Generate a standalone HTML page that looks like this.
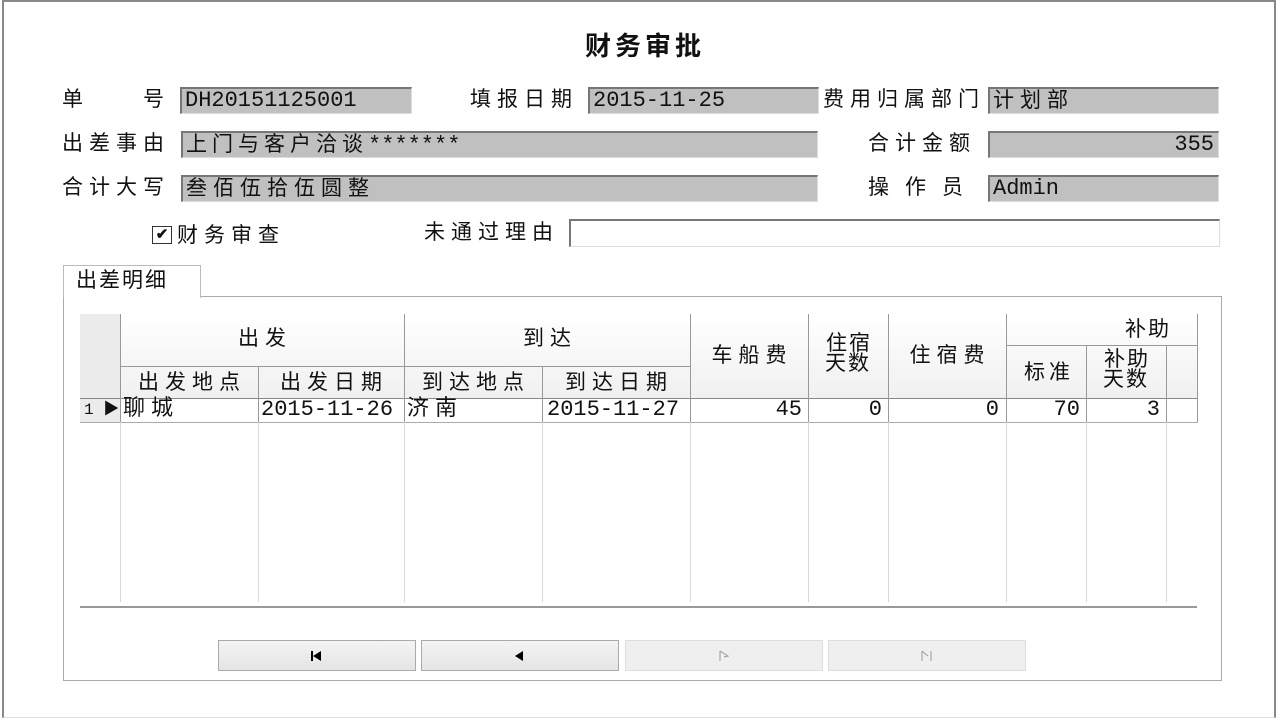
<!DOCTYPE html>
<html><head><meta charset="utf-8"><style>
*{margin:0;padding:0;box-sizing:border-box}
body{width:1280px;height:720px;background:#fff;position:relative;overflow:hidden;font-family:"Liberation Sans","Noto Sans CJK SC",sans-serif;color:#111}
.a{position:absolute}
.lbl{position:absolute;font-size:21px;line-height:26px;white-space:nowrap;letter-spacing:6px}
.inp{position:absolute;background:#c0c0c0;border-top:2px solid #777;border-left:2px solid #777;border-right:1px solid #ddd;border-bottom:1px solid #ddd;font-family:"Liberation Mono","Noto Sans CJK SC",monospace;font-size:22px;line-height:24px;padding-left:3px;white-space:nowrap;overflow:hidden}
.cn{font-family:"Liberation Sans","Noto Sans CJK SC",sans-serif;font-size:21px;letter-spacing:6px}
.vl{position:absolute;width:1px;background:#d8d8d8}
.hv{position:absolute;width:1px;background:#999}
.h{position:absolute;font-size:21px;text-align:center;line-height:22px;letter-spacing:6px;text-indent:6px}
.d{position:absolute;font-size:22px;top:399px;line-height:22px;font-family:"Liberation Mono","Noto Sans CJK SC",monospace}
.btn{position:absolute;top:640px;height:31px;width:198px;background:linear-gradient(#f4f4f4,#e4e4e4);border:1px solid #aaa;text-align:center}
.btn.dis{border-color:#ddd;background:#efefef}
</style></head><body>
<div class="a" style="left:2px;top:0;width:1274px;height:718px;border:2px solid #888;border-bottom:1px solid #ddd;border-top-width:2px"></div>
<div class="a" style="left:0;width:1280px;top:26px;text-align:center;font-size:26px;font-weight:bold;padding-left:10px;letter-spacing:4px">财务审批</div>

<div class="lbl" style="left:62px;top:87px;letter-spacing:0">单<span style="display:inline-block;width:60px"></span>号</div>
<div class="inp" style="left:180px;top:87px;width:232px;height:27px">DH20151125001</div>
<div class="lbl" style="left:470px;top:87px">填报日期</div>
<div class="inp" style="left:588px;top:87px;width:231px;height:27px">2015-11-25</div>
<div class="lbl" style="left:823px;top:87px;letter-spacing:6px">费用归属部门</div>
<div class="inp cn" style="left:988px;top:87px;width:231px;height:27px">计划部</div>

<div class="lbl" style="left:62px;top:131px">出差事由</div>
<div class="inp cn" style="left:181px;top:131px;width:637px;height:27px;letter-spacing:5px">上门与客户洽谈<span style="letter-spacing:0;font-family:'Liberation Mono',monospace;font-size:22px">*******</span></div>
<div class="lbl" style="left:868px;top:131px">合计金额</div>
<div class="inp" style="left:988px;top:131px;width:231px;height:27px;text-align:right;padding-right:4px">355</div>

<div class="lbl" style="left:62px;top:175px">合计大写</div>
<div class="inp cn" style="left:181px;top:175px;width:637px;height:27px">叁佰伍拾伍圆整</div>
<div class="lbl" style="left:868px;top:175px;letter-spacing:0">操<span style="display:inline-block;width:16px"></span>作<span style="display:inline-block;width:16px"></span>员</div>
<div class="inp" style="left:988px;top:175px;width:231px;height:27px">Admin</div>

<div class="a" style="left:152px;top:226px;width:20px;height:18px;border:1px solid #333;font-size:15px;line-height:16px;text-align:center;font-weight:bold">✔</div>
<div class="lbl" style="left:177px;top:223px">财务审查</div>
<div class="lbl" style="left:424px;top:220px">未通过理由</div>
<div class="a" style="left:569px;top:219px;width:651px;height:28px;border-top:2px solid #777;border-left:2px solid #777;border-right:1px solid #ddd;border-bottom:1px solid #ddd"></div>

<div class="a" style="left:63px;top:265px;width:138px;height:33px;border:1px solid #bbb;border-bottom:none;background:#fff;z-index:2"></div>
<div class="lbl" style="left:76px;top:268px;z-index:3;letter-spacing:2px">出差明细</div>
<div class="a" style="left:63px;top:296px;width:1159px;height:385px;border:1px solid #aaa"></div>

<div class="a" style="left:80px;top:314px;width:1118px;height:84px;background:linear-gradient(#fff,#f0f0f0)"></div>
<div class="a" style="left:80px;top:314px;width:40px;height:108px;background:#ececec"></div>
<div class="a" style="left:120px;top:366px;width:570px;height:1px;background:#999"></div>
<div class="a" style="left:1006px;top:345px;width:192px;height:1px;background:#999"></div>
<div class="a" style="left:80px;top:398px;width:1118px;height:1px;background:#888"></div>
<div class="a" style="left:80px;top:422px;width:1118px;height:1px;background:#aaa"></div>
<div class="hv" style="left:120px;top:314px;height:108px"></div>
<div class="hv" style="left:258px;top:366px;height:56px"></div>
<div class="hv" style="left:404px;top:314px;height:108px"></div>
<div class="hv" style="left:542px;top:366px;height:56px"></div>
<div class="hv" style="left:690px;top:314px;height:108px"></div>
<div class="hv" style="left:808px;top:314px;height:108px"></div>
<div class="hv" style="left:888px;top:314px;height:108px"></div>
<div class="hv" style="left:1006px;top:314px;height:108px"></div>
<div class="hv" style="left:1086px;top:345px;height:77px"></div>
<div class="hv" style="left:1166px;top:345px;height:77px"></div>
<div class="hv" style="left:1197px;top:314px;height:108px"></div>
<div class="vl" style="left:120px;top:422px;height:180px"></div>
<div class="vl" style="left:258px;top:422px;height:180px"></div>
<div class="vl" style="left:404px;top:422px;height:180px"></div>
<div class="vl" style="left:542px;top:422px;height:180px"></div>
<div class="vl" style="left:690px;top:422px;height:180px"></div>
<div class="vl" style="left:808px;top:422px;height:180px"></div>
<div class="vl" style="left:888px;top:422px;height:180px"></div>
<div class="vl" style="left:1006px;top:422px;height:180px"></div>
<div class="vl" style="left:1086px;top:422px;height:180px"></div>
<div class="vl" style="left:1166px;top:422px;height:180px"></div>
<div class="a" style="left:80px;top:606px;width:1117px;height:2px;background:#999"></div>

<div class="h" style="left:120px;width:284px;top:328px">出发</div>
<div class="h" style="left:404px;width:286px;top:328px">到达</div>
<div class="h" style="left:120px;width:138px;top:372px">出发地点</div>
<div class="h" style="left:258px;width:146px;top:372px">出发日期</div>
<div class="h" style="left:404px;width:138px;top:372px">到达地点</div>
<div class="h" style="left:542px;width:148px;top:372px">到达日期</div>
<div class="h" style="left:690px;width:118px;top:345px">车船费</div>
<div class="h" style="left:808px;width:80px;top:334px;line-height:20px;letter-spacing:2px;text-indent:2px">住宿<br>天数</div>
<div class="h" style="left:888px;width:118px;top:345px">住宿费</div>
<div class="h" style="left:1100px;width:90px;top:319px;letter-spacing:2px">补助</div>
<div class="h" style="left:1006px;width:80px;top:362px;letter-spacing:4px">标准</div>
<div class="h" style="left:1086px;width:80px;top:350px;line-height:20px;letter-spacing:2px;text-indent:2px">补助<br>天数</div>

<div class="d" style="left:84px;font-size:16px">1 ▶</div>
<div class="d cn" style="left:123px">聊城</div>
<div class="d" style="left:261px">2015-11-26</div>
<div class="d cn" style="left:407px">济南</div>
<div class="d" style="left:547px">2015-11-27</div>
<div class="d" style="left:690px;width:112px;text-align:right">45</div>
<div class="d" style="left:808px;width:74px;text-align:right">0</div>
<div class="d" style="left:888px;width:111px;text-align:right">0</div>
<div class="d" style="left:1006px;width:74px;text-align:right">70</div>
<div class="d" style="left:1086px;width:74px;text-align:right">3</div>

<div class="btn" style="left:218px"><svg width="20" height="14" style="margin-top:8px"><rect x="4" y="2" width="2" height="10" fill="#000"/><path d="M6 7 L14 2 L14 12 Z" fill="#000"/></svg></div>
<div class="btn" style="left:421px"><svg width="20" height="14" style="margin-top:8px"><path d="M5 7 L13 2 L13 12 Z" fill="#000"/></svg></div>
<div class="btn dis" style="left:625px"><svg width="20" height="14" style="margin-top:8px"><path d="M6 2 L6 12 M6 2 L14 7 L10 8" stroke="#999" fill="none"/></svg></div>
<div class="btn dis" style="left:828px"><svg width="20" height="14" style="margin-top:8px"><path d="M5 2 L5 12 M5 2 L11 7 M14 2 L14 12" stroke="#999" fill="none"/></svg></div>
</body></html>
